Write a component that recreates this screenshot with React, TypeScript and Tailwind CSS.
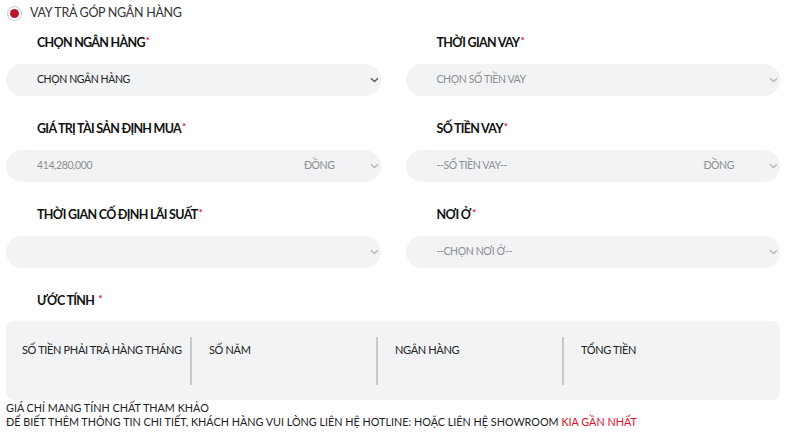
import React from "react";

const Chevron = ({ dark }: { dark?: boolean }) => (
  <svg width="9" height="6" viewBox="0 0 9 6" className="shrink-0">
    <path d="M1 1.2 L4.5 4.5 L8 1.2" fill="none" stroke={dark ? "#555" : "#b5b8ba"} strokeWidth="1.3" />
  </svg>
);

const Label = ({ children, star = true, space = false }: { children: React.ReactNode; star?: boolean; space?: boolean }) => (
  <div className="h-[22px] flex items-center pl-[31px] text-[12.5px] tracking-[-0.7px] font-bold text-[#111]">
    <span>{children}</span>
    {star && <span className={`text-[#e3102b] self-start mt-[1px] text-[10px] ${space ? "ml-[4px]" : "ml-[1px]"}`}>*</span>}
  </div>
);

const Field = ({ text, unit, dark, muted = true }: { text?: string; unit?: string; dark?: boolean; muted?: boolean }) => (
  <div className="h-[32px] rounded-full bg-[#f1f3f4] flex items-center pl-[31px] pr-[2px] text-[10.5px] tracking-[-0.4px]">
    <span className={`flex-1 ${muted ? "text-[#8c8f91]" : "text-[#222]"}`}>{text}</span>
    {unit && <span className="text-[#8c8f91] mr-[35px]">{unit}</span>}
    <Chevron dark={dark} />
  </div>
);

export default function App() {
  return (
    <div className="w-[800px] h-[436px] bg-white overflow-hidden" style={{ fontFamily: "Lato, 'Noto Sans', sans-serif" }}>
      <div className="h-[26px] flex items-center pl-[7px] pt-[1px]">
        <span className="w-[15px] h-[15px] rounded-full border border-[#c9c9c9] flex items-center justify-center bg-white">
          <span className="w-[9px] h-[9px] rounded-full bg-[#bb162b]" />
        </span>
        <span className="ml-[8px] text-[12.5px] tracking-[-0.3px] text-[#333]">VAY TRẢ GÓP NGÂN HÀNG</span>
      </div>
      <div className="grid grid-cols-2 gap-x-[25px] px-[6px] pr-[20px] mt-[6px]">
        <div>
          <Label>CHỌN NGÂN HÀNG</Label>
          <div className="mt-[10px]"><Field text="CHỌN NGÂN HÀNG" dark muted={false} /></div>
        </div>
        <div>
          <Label>THỜI GIAN VAY</Label>
          <div className="mt-[10px]"><Field text="CHỌN SỐ TIỀN VAY" /></div>
        </div>
        <div className="mt-[22px]">
          <Label>GIÁ TRỊ TÀI SẢN ĐỊNH MUA</Label>
          <div className="mt-[10px]"><Field text="414,280,000" unit="ĐỒNG" /></div>
        </div>
        <div className="mt-[22px]">
          <Label>SỐ TIỀN VAY</Label>
          <div className="mt-[10px]"><Field text="--SỐ TIỀN VAY--" unit="ĐỒNG" /></div>
        </div>
        <div className="mt-[22px]">
          <Label>THỜI GIAN CỐ ĐỊNH LÃI SUẤT</Label>
          <div className="mt-[10px]"><Field text="" /></div>
        </div>
        <div className="mt-[22px]">
          <Label>NƠI Ở</Label>
          <div className="mt-[10px]"><Field text="--CHỌN NƠI Ở--" /></div>
        </div>
      </div>
      <div className="px-[6px] pr-[20px] mt-[22px]">
        <Label space>ƯỚC TÍNH</Label>
        <div className="mt-[9px] h-[79px] rounded-[8px] bg-[#f1f3f4] flex pl-[16px] pt-[16px] text-[11px] tracking-[-0.35px] text-[#222] whitespace-nowrap">
          <div className="w-[170px] h-[48px] border-r-2 border-[#c8cbcd] pt-[5px]">SỐ TIỀN PHẢI TRẢ HÀNG THÁNG</div>
          <div className="w-[186px] h-[48px] border-r-2 border-[#c8cbcd] pt-[5px] pl-[17px]">SỐ NĂM</div>
          <div className="w-[186px] h-[48px] border-r-2 border-[#c8cbcd] pt-[5px] pl-[17px]">NGÂN HÀNG</div>
          <div className="w-[186px] h-[48px] pt-[5px] pl-[17px]">TỔNG TIỀN</div>
        </div>
      </div>
      <div className="px-[6px] mt-[1px] text-[10.8px] leading-[14px] text-[#222] whitespace-nowrap">
        <div>GIÁ CHỈ MANG TÍNH CHẤT THAM KHẢO</div>
        <div>
          ĐỂ BIẾT THÊM THÔNG TIN CHI TIẾT, KHÁCH HÀNG VUI LÒNG LIÊN HỆ HOTLINE: HOẶC LIÊN HỆ SHOWROOM{" "}
          <span className="text-[#e3102b]">KIA GẦN NHẤT</span>
        </div>
      </div>
    </div>
  );
}
